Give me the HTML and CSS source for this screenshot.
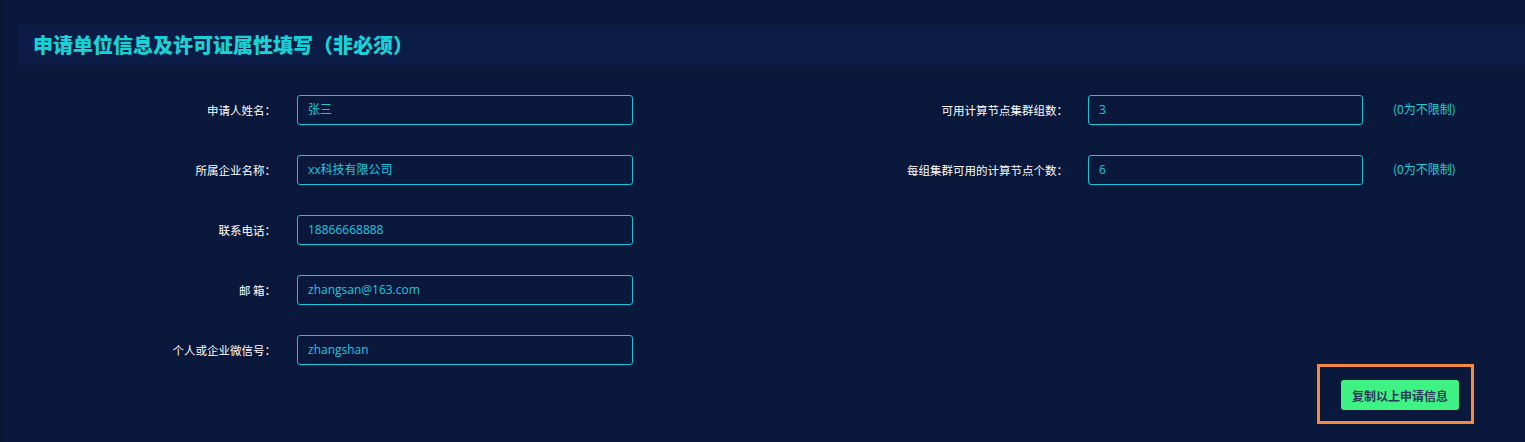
FILE: index.html
```html
<!DOCTYPE html>
<html lang="zh-CN">
<head>
<meta charset="utf-8">
<title>申请单位信息及许可证属性填写</title>
<link rel="stylesheet" href="styles.css">
</head>
<body>
<div class="page">
  <div class="edge"></div>
  <div class="panel">
    <div class="panel-head">申请单位信息及许可证属性填写（非必须）</div>
    <div class="panel-body">
      <div class="form-left">
        <label class="lbl">申请人姓名：</label>
        <div class="field">张三</div>
        <label class="lbl">所属企业名称：</label>
        <div class="field">xx科技有限公司</div>
        <label class="lbl">联系电话：</label>
        <div class="field">18866668888</div>
        <label class="lbl">邮 箱：</label>
        <div class="field">zhangsan@163.com</div>
        <label class="lbl">个人或企业微信号：</label>
        <div class="field">zhangshan</div>
      </div>
      <div class="right-col">
        <div class="form-right">
          <label class="lbl">可用计算节点集群组数：</label>
          <div class="field">3</div>
          <span class="hint">(0为不限制)</span>
          <label class="lbl">每组集群可用的计算节点个数：</label>
          <div class="field">6</div>
          <span class="hint">(0为不限制)</span>
        </div>
        <div class="action">
          <div class="highlight">
            <button class="btn-copy" type="button">复制以上申请信息</button>
          </div>
        </div>
      </div>
    </div>
  </div>
</div>
</body>
</html>
```

FILE: styles.css
```css
* { box-sizing: border-box; }
html, body {
  margin: 0;
  padding: 0;
  width: 1525px;
  height: 442px;
  overflow: hidden;
  background: #0a183b;
  font-family: "Noto Sans CJK SC", "Microsoft YaHei", sans-serif;
}
.page {
  display: flex;
  height: 442px;
}
.edge {
  width: 3px;
  flex: none;
  background: #081533;
}
.panel {
  flex: 1;
  padding-top: 25px;
  padding-left: 15px;
}
.panel-head {
  height: 40px;
  background: #0b1d46;
  color: #17d3d8;
  font-size: 20px;
  font-weight: 900;
  line-height: 40px;
  padding-left: 15px;
}
.panel-body {
  display: flex;
  padding-top: 30px;
}
.form-left {
  display: grid;
  grid-template-columns: 258px 336px;
  grid-auto-rows: 30px;
  column-gap: 21px;
  row-gap: 30px;
  align-items: center;
}
.lbl {
  color: #ffffff;
  font-size: 11.5px;
  text-align: right;
  white-space: nowrap;
}
.field {
  height: 30px;
  border: 1px solid #12c6dc;
  border-radius: 3px;
  color: #18c8e0;
  font-size: 12px;
  line-height: 28px;
  padding-left: 10px;
  font-family: "Open Sans", "Noto Sans CJK SC", sans-serif;
}
.right-col {
  flex: 1;
  display: flex;
  flex-direction: column;
}
.form-right {
  display: grid;
  grid-template-columns: 435px 275px auto;
  grid-auto-rows: 30px;
  column-gap: 20px;
  row-gap: 30px;
  align-items: center;
}
.hint {
  color: #1bd0d8;
  font-size: 12px;
  margin-left: 10px;
  margin-top: -4px;
  white-space: nowrap;
}
.action {
  display: flex;
  justify-content: flex-end;
  padding-right: 51px;
  margin-top: 179px;
}
.highlight {
  width: 157px;
  height: 60px;
  border: 3px solid #f68a3c;
  display: flex;
  align-items: center;
  justify-content: flex-start;
  padding-left: 21px;
  padding-top: 2px;
}
.btn-copy {
  width: 118px;
  height: 30px;
  border: none;
  border-radius: 3px;
  background: #3ef283;
  color: #2b3a5c;
  font-family: "Noto Sans CJK SC", sans-serif;
  font-size: 12px;
  font-weight: 700;
  padding: 0;
  cursor: pointer;
}
```
